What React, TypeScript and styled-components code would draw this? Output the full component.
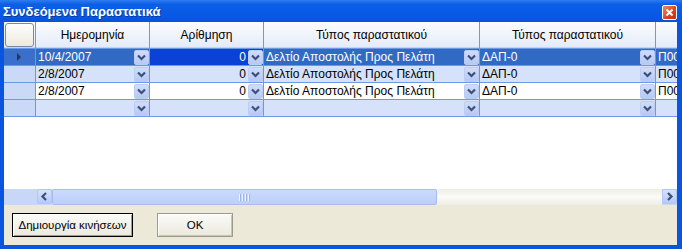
import React from 'react'
import styled, { createGlobalStyle } from 'styled-components'

const GlobalStyle = createGlobalStyle`
	html, body {
		margin: 0;
		padding: 0;
		background: #ffffff;
	}
	body {
		font-family: 'Liberation Sans', Arial, sans-serif;
		font-size: 12px;
	}
`

const Window = styled.div`
	width: 682px;
	height: 249px;
	box-sizing: border-box;
	background: #0a55e0;
	padding: 0 5px 4px 4px;
	display: flex;
	flex-direction: column;
`

const TitleBar = styled.div`
	height: 22px;
	margin: 0 -5px 0 -4px;
	padding: 0 5px 0 3px;
	display: flex;
	align-items: center;
	justify-content: space-between;
	background: linear-gradient(#2d7cf0 0%, #0b5fe6 20%, #0758e4 80%, #0a52d6 100%);
`

const Title = styled.span`
	color: #ffffff;
	font-weight: bold;
	font-size: 13px;
	text-shadow: 1px 1px 0 #0a3a9e;
	margin-top: 1px;
`

const CloseButton = styled.div`
	width: 13px;
	height: 13px;
	margin-top: 2px;
	border: 1px solid #ffffff;
	border-radius: 2px;
	background: linear-gradient(135deg, #f08a6a, #d8421f 60%, #c43010);
	display: flex;
	align-items: center;
	justify-content: center;
`

const DataArea = styled.div`
	height: 167px;
	background: #ffffff;
`

const Table = styled.div`
	display: grid;
	grid-template-columns: 31px 113px 113px 215px 175px 21px;
	grid-template-rows: 26px repeat(4, 16px);
	column-gap: 1px;
	row-gap: 1px;
	background: #6d98e4;
	padding-bottom: 1px;
`

const HeaderCell = styled.div`
	background: linear-gradient(#fbfcfe, #e4ebf8);
	display: flex;
	align-items: center;
	justify-content: center;
	color: #000000;
	border-bottom: 1px solid #c4d3ef;
	box-sizing: border-box;
`

const CornerCell = styled(HeaderCell)`
	padding: 1px 1px 0 1px;
`

const CornerButton = styled.div`
	width: 100%;
	height: 100%;
	box-sizing: border-box;
	border: 1px solid #7a8aa6;
	border-radius: 3px;
	background: linear-gradient(#fdfdfb, #ece9df);
`

const RowHead = styled.div<{ $current?: boolean }>`
	background: ${p => (p.$current ? '#3a6fcc' : '#c9d9f6')};
	display: flex;
	align-items: center;
	justify-content: center;
`

type TTone = 'selected' | 'focused' | 'light' | 'white'

const cellBg: Record<TTone, string> = {
	selected: '#316ac5',
	focused: '#0b42d6',
	light: '#d5e2f9',
	white: '#ffffff',
}

const Cell = styled.div<{ $tone: TTone }>`
	background: ${p => cellBg[p.$tone]};
	color: ${p => (p.$tone === 'selected' || p.$tone === 'focused' ? '#ffffff' : '#000000')};
	display: flex;
	align-items: center;
	overflow: hidden;
	white-space: nowrap;
`

const CellText = styled.span<{ $right?: boolean }>`
	flex: 1;
	padding: 0 2px;
	text-align: ${p => (p.$right ? 'right' : 'left')};
`

const DropButton = styled.div`
	width: 15px;
	height: 15px;
	flex: none;
	box-sizing: border-box;
	border: 1px solid #bccdf3;
	border-radius: 2px;
	background: linear-gradient(#cfdcfb, #b6c9f4);
	display: flex;
	align-items: center;
	justify-content: center;
`

const ScrollBar = styled.div`
	height: 16px;
	display: flex;
	background: #c8d7f6;
`

const ScrollCorner = styled.div`
	width: 33px;
	background: #c8d7f6;
`

const ScrollArrow = styled.div`
	width: 15px;
	height: 15px;
	box-sizing: border-box;
	border: 1px solid #b3c7f3;
	border-radius: 2px;
	background: linear-gradient(#d6e1fc, #b7caf6);
	display: flex;
	align-items: center;
	justify-content: center;
`

const ScrollTrack = styled.div`
	flex: 1;
	display: flex;
	background: linear-gradient(#eeede6, #fbfbf8 50%, #eeede5);
`

const ScrollThumb = styled.div`
	width: 385px;
	box-sizing: border-box;
	border: 1px solid #a8bdef;
	border-radius: 2px;
	background: linear-gradient(#cbdafd, #bccefa);
	display: flex;
	align-items: center;
	justify-content: center;
	gap: 1px;
`

const Grip = styled.span`
	width: 1px;
	height: 7px;
	background: #eef3ff;
	box-shadow: 1px 0 0 #9db4ea;
	margin-right: 1px;
`

const ButtonPanel = styled.div`
	flex: 1;
	background: #ece9d8;
	display: flex;
	align-items: flex-start;
	padding: 8px 0 0 8px;
	gap: 24px;
`

const PanelButton = styled.div<{ $default?: boolean; $width: number }>`
	width: ${p => p.$width}px;
	height: 24px;
	box-sizing: border-box;
	border: 1px solid ${p => (p.$default ? '#000000' : '#9a9a8e')};
	box-shadow: ${p =>
		p.$default
			? 'inset 1px 1px 0 #ffffff, inset -1px -1px 0 #a09c8c'
			: 'inset 1px 1px 0 #ffffff, inset -1px -1px 0 #c8c4b4'};
	background: linear-gradient(#fbfbf8, #ebe8de);
	display: flex;
	align-items: center;
	justify-content: center;
	color: #000000;
	font-size: 11.5px;
	white-space: nowrap;
`

const Chevron = ({ dir = 'down' }: { dir?: 'down' | 'left' | 'right' }) => {
	const d =
		dir === 'down'
			? 'M3 4.5 L6.5 8 L10 4.5'
			: dir === 'left'
				? 'M8 3 L4.5 6.5 L8 10'
				: 'M5 3 L8.5 6.5 L5 10'
	return (
		<svg width="13" height="13" viewBox="0 0 13 13">
			<path d={d} fill="none" stroke="#3c4f78" strokeWidth="2.2" />
		</svg>
	)
}

type TRow = {
	date: string
	num: string
	type: string
	code: string
	extra: string
	tones: TTone[]
	current?: boolean
}

const rows: TRow[] = [
	{
		date: '10/4/2007',
		num: '0',
		type: 'Δελτίο Αποστολής Προς Πελάτη',
		code: 'ΔΑΠ-0',
		extra: 'Π00',
		tones: ['selected', 'focused', 'selected', 'selected', 'selected'],
		current: true,
	},
	{
		date: '2/8/2007',
		num: '0',
		type: 'Δελτίο Αποστολής Προς Πελάτη',
		code: 'ΔΑΠ-0',
		extra: 'Π00',
		tones: ['light', 'light', 'light', 'light', 'light'],
	},
	{
		date: '2/8/2007',
		num: '0',
		type: 'Δελτίο Αποστολής Προς Πελάτη',
		code: 'ΔΑΠ-0',
		extra: 'Π00',
		tones: ['white', 'white', 'white', 'white', 'white'],
	},
	{
		date: '',
		num: '',
		type: '',
		code: '',
		extra: '',
		tones: ['light', 'light', 'light', 'light', 'light'],
	},
]

const headers = ['Ημερομηνία', 'Αρίθμηση', 'Τύπος παραστατικού', 'Τύπος παραστατικού', '']

export default function App() {
	return (
		<>
			<GlobalStyle />
			<Window>
				<TitleBar>
					<Title>Συνδεόμενα Παραστατικά</Title>
					<CloseButton>
						<svg width="9" height="9" viewBox="0 0 9 9">
							<path d="M1.5 1.5 L7.5 7.5 M7.5 1.5 L1.5 7.5" stroke="#ffffff" strokeWidth="2" />
						</svg>
					</CloseButton>
				</TitleBar>
				<DataArea>
					<Table>
						<CornerCell>
							<CornerButton />
						</CornerCell>
						{headers.map((h, i) => (
							<HeaderCell key={i}>{h}</HeaderCell>
						))}
						{rows.map((r, ri) => (
							<React.Fragment key={ri}>
								<RowHead $current={r.current}>
									{r.current && (
										<svg width="5" height="8" viewBox="0 0 5 8">
											<path d="M0 0 L4 4 L0 8 Z" fill="#2a3550" />
										</svg>
									)}
								</RowHead>
								<Cell $tone={r.tones[0]}>
									<CellText>{r.date}</CellText>
									<DropButton>
										<Chevron />
									</DropButton>
								</Cell>
								<Cell $tone={r.tones[1]}>
									<CellText $right>{r.num}</CellText>
									<DropButton>
										<Chevron />
									</DropButton>
								</Cell>
								<Cell $tone={r.tones[2]}>
									<CellText>{r.type}</CellText>
									<DropButton>
										<Chevron />
									</DropButton>
								</Cell>
								<Cell $tone={r.tones[3]}>
									<CellText>{r.code}</CellText>
									<DropButton>
										<Chevron />
									</DropButton>
								</Cell>
								<Cell $tone={r.tones[4]}>
									<CellText>{r.extra}</CellText>
								</Cell>
							</React.Fragment>
						))}
					</Table>
				</DataArea>
				<ScrollBar>
					<ScrollCorner />
					<ScrollArrow>
						<Chevron dir="left" />
					</ScrollArrow>
					<ScrollTrack>
						<ScrollThumb>
							<Grip />
							<Grip />
							<Grip />
							<Grip />
						</ScrollThumb>
					</ScrollTrack>
					<ScrollArrow>
						<Chevron dir="right" />
					</ScrollArrow>
				</ScrollBar>
				<ButtonPanel>
					<PanelButton $default $width={121}>
						Δημιουργία κινήσεων
					</PanelButton>
					<PanelButton $width={76}>OK</PanelButton>
				</ButtonPanel>
			</Window>
		</>
	)
}
